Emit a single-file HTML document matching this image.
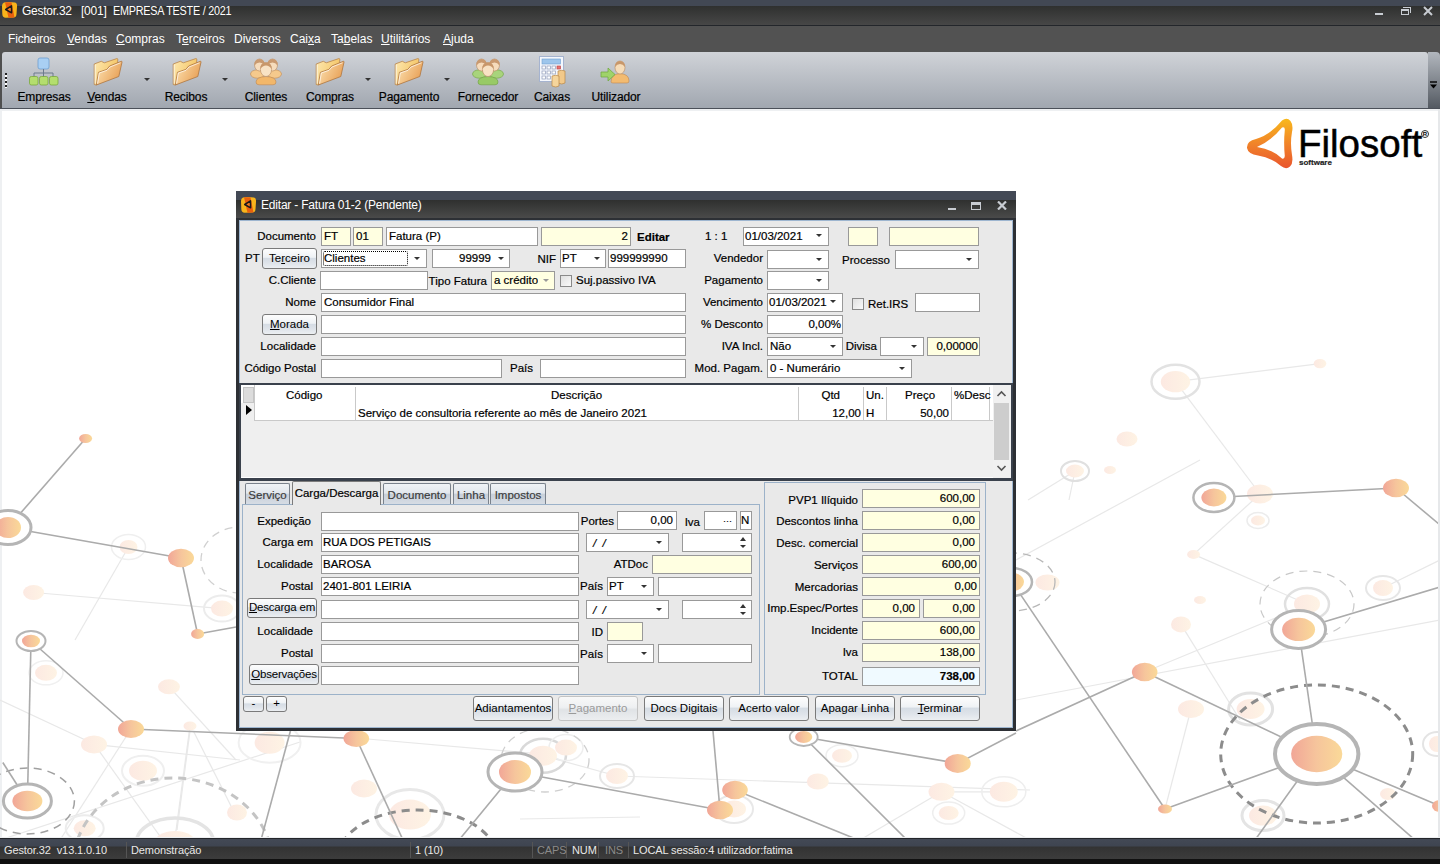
<!DOCTYPE html>
<html><head><meta charset="utf-8">
<style>
*{margin:0;padding:0;box-sizing:border-box}
html,body{width:1440px;height:864px;overflow:hidden}
body{position:relative;background:#fff;font-family:"Liberation Sans",sans-serif;font-size:11.5px;color:#000}
.a{position:absolute}
.t{position:absolute;white-space:nowrap;line-height:13px;-webkit-text-stroke:0.2px currentColor}
.r{transform:translateX(-100%)}
.f{position:absolute;background:#fff;border:1px solid #999;height:19px;overflow:hidden}
.y{background:#ffffe1}
.b{position:absolute;border:1px solid #7a7a7a;border-radius:3px;background:linear-gradient(#fdfdfd 0%,#eff2f5 44%,#d5dce4 48%,#dfe4ea 75%,#eceff2 100%);text-align:center;white-space:nowrap;line-height:18px}
.ar{position:absolute;width:0;height:0;border-left:3px solid transparent;border-right:3px solid transparent;border-top:3.5px solid #333}
.u{text-decoration:underline}
.tl{top:91px;font-size:12px;letter-spacing:-0.1px;transform:translateX(-50%)}
.tab{height:21px;border:1px solid #7a828c;border-bottom:none;background:linear-gradient(#f0f3f6 0%,#e2e7ed 45%,#c8d0da 52%,#d6dce4 100%);color:#3a3a3a;text-align:center;line-height:23px;white-space:nowrap;border-radius:2px 2px 0 0;-webkit-text-stroke:0.15px #3a3a3a}
.w{color:#fff;-webkit-text-stroke:0 !important}
#title{left:0;top:0;width:1440px;height:25px;background:linear-gradient(#424854 0,#424854 6px,#2f302f 6px,#474747 25px)}
#menu{left:0;top:25px;width:1440px;height:27px;background:#525252;border-top:1px solid #23262b}
#tb{left:2px;top:52px;width:1426px;height:56px;border-radius:3px 3px 0 0;background:linear-gradient(#d0d3d8,#a1a7b0)}
#tbo{left:1428px;top:52px;width:12px;height:56px;border-radius:0 4px 0 0;background:linear-gradient(#b2b7be,#545a62)}
#status{left:0;top:837px;width:1440px;height:27px;background:linear-gradient(#eef0f2 0,#eef0f2 1px,#23252a 1px,#23252a 2px,#434955 2px,#3f4551 9px,#333333 10px,#3c3c3c 22px,#101010 22px)}
.sep{position:absolute;top:842px;width:1px;height:16px;background:#1a1a1a;border-right:1px solid #555}
</style></head><body>
<!-- background network -->
<div class="a" style="left:0;top:108px;width:1440px;height:1px;background:#4b5059"></div>
<div class="a" style="left:0;top:109px;width:1440px;height:2px;background:#eef0f2"></div>
<div class="a" style="left:0;top:109px;width:2px;height:730px;background:#eef0f2"></div>
<div class="a" style="left:1438px;top:109px;width:2px;height:730px;background:#e6e8ea"></div>

<svg class="a" style="left:0;top:111px" width="1438" height="726" viewBox="0 111 1438 726">
<defs><linearGradient id="og"><stop offset="0" stop-color="#f1a697"/><stop offset="0.5" stop-color="#f6c59c"/><stop offset="1" stop-color="#fad998"/></linearGradient><linearGradient id="fg"><stop offset="0" stop-color="#fce9e2"/><stop offset="1" stop-color="#fef3e4"/></linearGradient></defs>
<line x1="1175.5" y1="381.7" x2="1320" y2="363.6" stroke="#e8e8e8" stroke-width="1.2"/>
<line x1="1175.5" y1="381.7" x2="1260" y2="494" stroke="#e8e8e8" stroke-width="1.2"/>
<line x1="1193.6" y1="554.4" x2="1260" y2="494" stroke="#e8e8e8" stroke-width="1.2"/>
<line x1="1193.6" y1="554.4" x2="1307" y2="604" stroke="#e8e8e8" stroke-width="1.2"/>
<line x1="1144.7" y1="672" x2="1290" y2="612" stroke="#e8e8e8" stroke-width="1.2"/>
<line x1="1075" y1="471" x2="1028" y2="500" stroke="#e8e8e8" stroke-width="1.2"/>
<line x1="1075" y1="471" x2="1069" y2="500" stroke="#e8e8e8" stroke-width="1.2"/>
<line x1="1181" y1="624.4" x2="1240" y2="720" stroke="#e8e8e8" stroke-width="1.2"/>
<line x1="1383" y1="588" x2="1440" y2="560" stroke="#e8e8e8" stroke-width="1.2"/>
<line x1="128.5" y1="547" x2="75" y2="640" stroke="#e8e8e8" stroke-width="1.2"/>
<line x1="33.6" y1="592.5" x2="222" y2="608.6" stroke="#e8e8e8" stroke-width="1.2"/>
<line x1="94" y1="744.4" x2="240" y2="760" stroke="#e8e8e8" stroke-width="1.2"/>
<line x1="169" y1="686.7" x2="236" y2="760" stroke="#e8e8e8" stroke-width="1.2"/>
<line x1="190" y1="726" x2="175" y2="838" stroke="#e8e8e8" stroke-width="1.2"/>
<line x1="0" y1="700" x2="94" y2="744" stroke="#e8e8e8" stroke-width="1.2"/>
<line x1="356" y1="738" x2="530" y2="753" stroke="#e8e8e8" stroke-width="1.2"/>
<line x1="543" y1="755.7" x2="617" y2="776" stroke="#e8e8e8" stroke-width="1.2"/>
<line x1="617" y1="776" x2="1030" y2="790" stroke="#e8e8e8" stroke-width="1.2"/>
<line x1="640" y1="817" x2="520" y2="819" stroke="#e8e8e8" stroke-width="1.2"/>
<line x1="941.5" y1="791.8" x2="1003.8" y2="791.8" stroke="#e8e8e8" stroke-width="1.2"/>
<line x1="941.5" y1="791.8" x2="860" y2="840" stroke="#e8e8e8" stroke-width="1.2"/>
<line x1="941.5" y1="791.8" x2="1030" y2="840" stroke="#e8e8e8" stroke-width="1.2"/>
<line x1="1191" y1="709" x2="1165" y2="809" stroke="#e8e8e8" stroke-width="1.2"/>
<line x1="1016" y1="700" x2="1440" y2="620" stroke="#e8e8e8" stroke-width="1.2"/>
<line x1="1016" y1="560" x2="1200" y2="460" stroke="#e8e8e8" stroke-width="1.2"/>
<line x1="60" y1="840" x2="131" y2="729" stroke="#e8e8e8" stroke-width="1.2"/>
<line x1="99.6" y1="751.7" x2="162.7" y2="840" stroke="#e8e8e8" stroke-width="1.2"/>
<line x1="190" y1="731" x2="177" y2="830" stroke="#e8e8e8" stroke-width="1.2"/>
<line x1="193.4" y1="731" x2="233" y2="810" stroke="#e8e8e8" stroke-width="1.2"/>
<line x1="0" y1="840" x2="300" y2="742" stroke="#e8e8e8" stroke-width="1.2"/>
<ellipse cx="1175.5" cy="381.7" rx="24" ry="17" fill="none" stroke="#e2e2e2" stroke-width="2.5"/>
<ellipse cx="1258" cy="520.5" rx="11" ry="8" fill="none" stroke="#ececec" stroke-width="1.5"/>
<ellipse cx="1383" cy="588" rx="17" ry="12" fill="none" stroke="#e6e6e6" stroke-width="2"/>
<ellipse cx="1307" cy="604" rx="22" ry="16" fill="none" stroke="#e0e0e0" stroke-width="2.5"/>
<ellipse cx="1075" cy="471" rx="14" ry="10" fill="none" stroke="#e0e0e0" stroke-width="2"/>
<ellipse cx="128.5" cy="547" rx="17" ry="12.5" fill="none" stroke="#efefef" stroke-width="1.5"/>
<ellipse cx="222" cy="608.6" rx="18" ry="13" fill="none" stroke="#ececec" stroke-width="2"/>
<ellipse cx="84.7" cy="828.3" rx="19" ry="13" fill="none" stroke="#ececec" stroke-width="2"/>
<ellipse cx="143" cy="770.8" rx="21" ry="15" fill="none" stroke="#efefef" stroke-width="2"/>
<ellipse cx="175" cy="843" rx="38.7" ry="25" fill="none" stroke="#e4e4e4" stroke-width="3.5"/>
<ellipse cx="46" cy="672.8" rx="17" ry="12" fill="none" stroke="#f0f0f0" stroke-width="1.5"/>
<ellipse cx="269.6" cy="742.7" rx="31" ry="20" fill="none" stroke="#f0f0f0" stroke-width="2"/>
<ellipse cx="410" cy="814.6" rx="34" ry="25" fill="none" stroke="#e8e8e8" stroke-width="3"/>
<ellipse cx="543" cy="755.7" rx="23" ry="17" fill="none" stroke="#d9d9d9" stroke-width="2.5"/>
<ellipse cx="566" cy="747.6" rx="17" ry="13" fill="none" stroke="#eeeeee" stroke-width="1.5"/>
<ellipse cx="617" cy="776" rx="17" ry="12" fill="none" stroke="#e6e6e6" stroke-width="2"/>
<ellipse cx="734" cy="809" rx="19" ry="14" fill="none" stroke="#e8e8e8" stroke-width="2"/>
<ellipse cx="842" cy="755.7" rx="16" ry="11" fill="none" stroke="#eeeeee" stroke-width="1.5"/>
<ellipse cx="948.7" cy="813" rx="16" ry="11" fill="none" stroke="#eeeeee" stroke-width="1.5"/>
<ellipse cx="1003.8" cy="791.8" rx="22" ry="15" fill="none" stroke="#eeeeee" stroke-width="1.5"/>
<ellipse cx="1250.6" cy="709" rx="22" ry="16" fill="none" stroke="#e2e2e2" stroke-width="3"/>
<ellipse cx="1263" cy="815.6" rx="21" ry="15" fill="none" stroke="#e4e4e4" stroke-width="3"/>
<ellipse cx="1437" cy="744" rx="14" ry="12" fill="none" stroke="#e4e4e4" stroke-width="2"/>
<ellipse cx="1175.5" cy="381.7" rx="14.7" ry="10.6" fill="url(#fg)"/>
<ellipse cx="1320" cy="363.6" rx="6.3" ry="4.7" fill="url(#fg)"/>
<ellipse cx="1260" cy="494" rx="13" ry="9.5" fill="url(#fg)"/>
<ellipse cx="1307" cy="604" rx="13" ry="9.5" fill="url(#fg)"/>
<ellipse cx="1193.6" cy="554.4" rx="6.5" ry="4.5" fill="url(#fg)"/>
<ellipse cx="1181" cy="624.4" rx="10" ry="8" fill="url(#fg)"/>
<ellipse cx="1258" cy="520.5" rx="7" ry="5" fill="url(#fg)"/>
<ellipse cx="1383" cy="588" rx="10" ry="8" fill="url(#fg)"/>
<ellipse cx="1075" cy="471" rx="9" ry="6.5" fill="url(#fg)"/>
<ellipse cx="1127" cy="439" rx="10.5" ry="7.5" fill="url(#fg)"/>
<ellipse cx="33.6" cy="592.5" rx="10.5" ry="7.5" fill="url(#fg)"/>
<ellipse cx="128.5" cy="547" rx="9" ry="7" fill="url(#fg)"/>
<ellipse cx="222" cy="608.6" rx="11" ry="8" fill="url(#fg)"/>
<ellipse cx="94" cy="744.4" rx="13" ry="9" fill="url(#fg)"/>
<ellipse cx="169" cy="686.7" rx="11" ry="7.5" fill="url(#fg)"/>
<ellipse cx="190" cy="726" rx="6.5" ry="4.5" fill="url(#fg)"/>
<ellipse cx="84.7" cy="828.3" rx="11" ry="8" fill="url(#fg)"/>
<ellipse cx="143" cy="770.8" rx="14" ry="10" fill="url(#fg)"/>
<ellipse cx="175" cy="845" rx="22" ry="14" fill="url(#fg)"/>
<ellipse cx="46" cy="672.8" rx="11" ry="8" fill="url(#fg)"/>
<ellipse cx="269.6" cy="742.7" rx="15" ry="11" fill="url(#fg)"/>
<ellipse cx="364" cy="788.5" rx="13" ry="9" fill="url(#fg)"/>
<ellipse cx="410" cy="814.6" rx="21" ry="15" fill="url(#fg)"/>
<ellipse cx="237" cy="812.5" rx="10" ry="8" fill="url(#fg)"/>
<ellipse cx="543" cy="755.7" rx="14" ry="10" fill="url(#fg)"/>
<ellipse cx="566" cy="747.6" rx="11" ry="8" fill="url(#fg)"/>
<ellipse cx="617" cy="776" rx="11" ry="8" fill="url(#fg)"/>
<ellipse cx="734" cy="809" rx="12" ry="8.5" fill="url(#fg)"/>
<ellipse cx="941.5" cy="791.8" rx="13" ry="9" fill="url(#fg)"/>
<ellipse cx="817.8" cy="781.5" rx="11" ry="8" fill="url(#fg)"/>
<ellipse cx="842" cy="755.7" rx="10" ry="7" fill="url(#fg)"/>
<ellipse cx="948.7" cy="813" rx="10" ry="7" fill="url(#fg)"/>
<ellipse cx="1003.8" cy="791.8" rx="14" ry="10" fill="url(#fg)"/>
<ellipse cx="1047.5" cy="582.5" rx="12" ry="8" fill="url(#fg)"/>
<ellipse cx="1191" cy="709" rx="13" ry="9" fill="url(#fg)"/>
<ellipse cx="1250.6" cy="709" rx="14" ry="10" fill="url(#fg)"/>
<ellipse cx="1263" cy="815.6" rx="14" ry="10" fill="url(#fg)"/>
<ellipse cx="1437" cy="744" rx="8" ry="8" fill="url(#fg)"/>
<ellipse cx="1388" cy="794" rx="8" ry="6" fill="url(#fg)"/>
<ellipse cx="1110" cy="470" rx="6" ry="4" fill="url(#fg)"/>
<ellipse cx="1200" cy="600" rx="6" ry="4" fill="url(#fg)"/>
<ellipse cx="27.4" cy="801" rx="47" ry="33" fill="none" stroke="#a0a0a0" stroke-width="1.5" stroke-dasharray="8 6"/>
<ellipse cx="417.5" cy="860" rx="80" ry="50" fill="none" stroke="#8c8c8c" stroke-width="3" stroke-dasharray="8 6"/>
<ellipse cx="1316.7" cy="754" rx="96" ry="69" fill="none" stroke="#8c8c8c" stroke-width="3" stroke-dasharray="8 6"/>
<ellipse cx="1307" cy="604" rx="47" ry="33" fill="none" stroke="#c8c8c8" stroke-width="1.2" stroke-dasharray="8 6"/>
<ellipse cx="1012" cy="582" rx="43" ry="29" fill="none" stroke="#b8b8b8" stroke-width="1.3" stroke-dasharray="8 6"/>
<ellipse cx="545" cy="760" rx="44" ry="32" fill="none" stroke="#cfcfcf" stroke-width="1.3" stroke-dasharray="8 6"/>
<ellipse cx="240" cy="560" rx="39" ry="33" fill="none" stroke="#d0d0d0" stroke-width="1.3" stroke-dasharray="8 6"/>
<ellipse cx="940" cy="870" rx="35" ry="30" fill="none" stroke="#999999" stroke-width="2.5" stroke-dasharray="8 6"/>
<ellipse cx="173" cy="866" rx="100" ry="88" fill="none" stroke="#c4c4c4" stroke-width="3" stroke-dasharray="8 6"/>
<line x1="85.6" y1="438.5" x2="8" y2="527.5" stroke="#ababab" stroke-width="1.6"/>
<line x1="8" y1="527.5" x2="181" y2="558" stroke="#ababab" stroke-width="1.6"/>
<line x1="181" y1="558" x2="197.6" y2="634" stroke="#ababab" stroke-width="1.6"/>
<line x1="197.6" y1="634" x2="236" y2="627" stroke="#ababab" stroke-width="1.6"/>
<line x1="31" y1="641" x2="131" y2="729" stroke="#ababab" stroke-width="1.6"/>
<line x1="31" y1="641" x2="27.4" y2="801" stroke="#ababab" stroke-width="1.6"/>
<line x1="2.8" y1="762.5" x2="27.4" y2="801" stroke="#ababab" stroke-width="1.6"/>
<line x1="131" y1="729" x2="356.3" y2="738.5" stroke="#ababab" stroke-width="1.6"/>
<line x1="356.3" y1="738.5" x2="403" y2="840" stroke="#ababab" stroke-width="1.6"/>
<line x1="290.4" y1="731" x2="261" y2="840" stroke="#ababab" stroke-width="1.6"/>
<line x1="515" y1="772" x2="720" y2="810" stroke="#ababab" stroke-width="1.6"/>
<line x1="515" y1="772" x2="459" y2="840" stroke="#ababab" stroke-width="1.6"/>
<line x1="713" y1="731" x2="720" y2="810" stroke="#ababab" stroke-width="1.6"/>
<line x1="735" y1="790" x2="858.4" y2="840" stroke="#ababab" stroke-width="1.6"/>
<line x1="803.7" y1="737" x2="957.7" y2="763.4" stroke="#ababab" stroke-width="1.6"/>
<line x1="803.7" y1="737" x2="907" y2="840" stroke="#ababab" stroke-width="1.6"/>
<line x1="957.7" y1="763.4" x2="1016" y2="733" stroke="#ababab" stroke-width="1.6"/>
<line x1="1012" y1="582" x2="1165" y2="809" stroke="#ababab" stroke-width="1.6"/>
<line x1="1144.7" y1="672" x2="1016" y2="731" stroke="#ababab" stroke-width="1.6"/>
<line x1="1144.7" y1="672" x2="1316.7" y2="754" stroke="#ababab" stroke-width="1.6"/>
<line x1="1213.9" y1="497.5" x2="1396" y2="488" stroke="#ababab" stroke-width="1.6"/>
<line x1="1396" y1="488" x2="1440" y2="525" stroke="#ababab" stroke-width="1.6"/>
<line x1="1298.6" y1="629.4" x2="1440" y2="587" stroke="#ababab" stroke-width="1.6"/>
<line x1="1298.6" y1="629.4" x2="1316.7" y2="754" stroke="#ababab" stroke-width="1.6"/>
<line x1="1165" y1="809" x2="1316.7" y2="754" stroke="#ababab" stroke-width="1.6"/>
<line x1="1316.7" y1="754" x2="1440" y2="806" stroke="#ababab" stroke-width="1.6"/>
<line x1="1316.7" y1="754" x2="1415" y2="840" stroke="#ababab" stroke-width="1.6"/>
<line x1="1316.7" y1="754" x2="1255" y2="840" stroke="#ababab" stroke-width="1.6"/>
<ellipse cx="8" cy="527.5" rx="23" ry="17" fill="#fff" stroke="#b5b5b5" stroke-width="3"/>
<ellipse cx="31" cy="641" rx="14.5" ry="10" fill="#fff" stroke="#b5b5b5" stroke-width="2"/>
<ellipse cx="27.4" cy="801" rx="24" ry="17" fill="#fff" stroke="#b5b5b5" stroke-width="3"/>
<ellipse cx="515" cy="772" rx="27" ry="19" fill="#fff" stroke="#b5b5b5" stroke-width="3"/>
<ellipse cx="803.7" cy="737" rx="14" ry="9" fill="#fff" stroke="#b5b5b5" stroke-width="1.8"/>
<ellipse cx="1012" cy="582" rx="20" ry="14" fill="#fff" stroke="#b5b5b5" stroke-width="2.5"/>
<ellipse cx="1213.9" cy="497.5" rx="20.5" ry="14.5" fill="#fff" stroke="#b5b5b5" stroke-width="2.5"/>
<ellipse cx="1298.6" cy="629.4" rx="27" ry="19" fill="#fff" stroke="#b5b5b5" stroke-width="3"/>
<ellipse cx="1316.7" cy="754" rx="41.7" ry="30" fill="#fff" stroke="#b5b5b5" stroke-width="4"/>
<ellipse cx="85.6" cy="438.5" rx="6.5" ry="4.6" fill="url(#og)"/>
<ellipse cx="8" cy="527.5" rx="13" ry="10.5" fill="url(#og)"/>
<ellipse cx="181" cy="558" rx="13" ry="9.3" fill="url(#og)"/>
<ellipse cx="31" cy="641" rx="9" ry="6.3" fill="url(#og)"/>
<ellipse cx="197.6" cy="634" rx="6.5" ry="5" fill="url(#og)"/>
<ellipse cx="131" cy="729" rx="13" ry="9" fill="url(#og)"/>
<ellipse cx="27.4" cy="801" rx="15" ry="10.3" fill="url(#og)"/>
<ellipse cx="356.3" cy="738.5" rx="12.8" ry="8.5" fill="url(#og)"/>
<ellipse cx="515" cy="772" rx="16" ry="11.9" fill="url(#og)"/>
<ellipse cx="720" cy="810" rx="13" ry="9.2" fill="url(#og)"/>
<ellipse cx="735" cy="790" rx="12.8" ry="9.2" fill="url(#og)"/>
<ellipse cx="803.7" cy="737" rx="8.6" ry="6" fill="url(#og)"/>
<ellipse cx="957.7" cy="763.4" rx="13" ry="9.5" fill="url(#og)"/>
<ellipse cx="1013" cy="582" rx="11" ry="9" fill="url(#og)"/>
<ellipse cx="1144.7" cy="672" rx="12.8" ry="9.3" fill="url(#og)"/>
<ellipse cx="1213.9" cy="497.5" rx="12.5" ry="9" fill="url(#og)"/>
<ellipse cx="1396" cy="488" rx="13" ry="9.3" fill="url(#og)"/>
<ellipse cx="1298.6" cy="629.4" rx="16.5" ry="11.7" fill="url(#og)"/>
<ellipse cx="1316.7" cy="754" rx="25.6" ry="18.2" fill="url(#og)"/>
<ellipse cx="1165" cy="809" rx="7" ry="4.5" fill="url(#og)"/>
<ellipse cx="1440" cy="806" rx="8" ry="6" fill="url(#og)"/>
</svg>
<svg class="a" style="left:1246px;top:118px" width="48" height="52" viewBox="0 0 48 52"><defs><linearGradient id="lg" x1="0" y1="0" x2="0" y2="1"><stop offset="0" stop-color="#f8b81c"/><stop offset="0.55" stop-color="#f07f2a"/><stop offset="1" stop-color="#e9562e"/></linearGradient></defs><path fill="url(#lg)" fill-rule="evenodd" d="M36 2.5 Q41 -1 44.5 3 Q47.5 7 46 14 Q44 25 46 37 Q47.5 45 44 48.5 Q40 52 35 48 Q26 40 12 37.5 Q2 36 1 30 Q0.5 23 10 21 Q24 17 36 2.5 Z M36 9.5 Q26 22 11 29 Q26 31 36 40.5 Q38.5 41.5 38.8 38 Q37.5 25 38.8 12 Q39 8.5 36 9.5 Z"/></svg>
<div class="t" style="left:1298px;top:124px;font-size:38.5px;line-height:40px;-webkit-text-stroke:0.5px #000;letter-spacing:0px">Filosoft</div>
<div class="a" style="left:1421px;top:130px;width:8px;height:8px;border:1px solid #333;border-radius:50%;font-size:6px;line-height:6px;text-align:center;font-weight:bold">R</div>
<div class="t" style="left:1299px;top:158px;font-size:8px;line-height:10px;font-weight:bold;color:#222">software</div>
<!-- title bar -->
<div id="title" class="a"></div>
<div class="t w" style="left:22px;top:5px;font-size:12px;letter-spacing:-0.25px">Gestor.32&nbsp;&nbsp; [001]&nbsp; <span style="display:inline-block;transform:scaleX(0.9);transform-origin:0 0">EMPRESA TESTE / 2021</span></div>
<div id="menu" class="a"></div>
<div class="a" style="left:0;top:52px;width:1440px;height:8px;background:#505050"></div>
<div class="a" style="left:0;top:52px;width:2px;height:56px;background:#4f4f4f"></div>
<div id="tb" class="a"></div>
<div id="tbo" class="a"></div>


<!-- toolbar -->
<div class="a" style="left:5px;top:73px;width:2px;height:15px;background:repeating-linear-gradient(#222 0,#222 2px,#fff 2px,#fff 4px)"></div>
<svg class="a" style="left:28px;top:57px" width="32" height="29" viewBox="0 0 32 29"><rect x="10" y="1" width="11" height="11" rx="2" fill="#a9cff3" stroke="#6f9fd0" stroke-width="0.8"/><path d="M15.5 12 V16 M6 20 V16 H25 V20 M15.5 16 V20" stroke="#6c7a8c" stroke-width="1" fill="none"/><rect x="1.5" y="19.5" width="8.5" height="8.5" rx="1.8" fill="#b4de6e" stroke="#7aa83e" stroke-width="0.8"/><rect x="11.5" y="19.5" width="8.5" height="8.5" rx="1.8" fill="#b4de6e" stroke="#7aa83e" stroke-width="0.8"/><rect x="21.5" y="19.5" width="8.5" height="8.5" rx="1.8" fill="#b4de6e" stroke="#7aa83e" stroke-width="0.8"/></svg>
<svg class="a" style="left:88px;top:54px" width="40" height="36" viewBox="0 0 40 36"><defs><linearGradient id="fb88" x1="0" y1="0" x2="1" y2="0.4"><stop offset="0" stop-color="#fde9b2"/><stop offset="1" stop-color="#f4c463"/></linearGradient><linearGradient id="ff88" x1="0" y1="0" x2="1" y2="0.5"><stop offset="0" stop-color="#fde6b8"/><stop offset="1" stop-color="#e9a258"/></linearGradient></defs><path d="M6.2 30.5 L6.2 10 L13.3 7.3 L16.3 8.8 L28.8 4.6 Q29.8 4.4 29.8 5.6 L29 20 L8 31 Z" fill="url(#fb88)" stroke="#b7844c" stroke-width="0.8" stroke-linejoin="round"/><path d="M7.2 29.5 L7.2 10.7" stroke="#fff" stroke-width="0.8" opacity="0.8"/><path d="M8.3 31 L10.4 18.3 L18.8 15.4 L21.7 12 L33.3 7.3 Q34.2 7.1 34 8.2 L30.8 22.5 Z" fill="url(#ff88)" stroke="#ae7640" stroke-width="0.8" stroke-linejoin="round"/><path d="M9.6 29.5 L11.3 19 L19 16.3 L22 13 L32.5 8.8" stroke="#fff" stroke-width="0.8" fill="none" opacity="0.85"/></svg><svg class="a" style="left:167px;top:54px" width="40" height="36" viewBox="0 0 40 36"><defs><linearGradient id="fb167" x1="0" y1="0" x2="1" y2="0.4"><stop offset="0" stop-color="#fde9b2"/><stop offset="1" stop-color="#f4c463"/></linearGradient><linearGradient id="ff167" x1="0" y1="0" x2="1" y2="0.5"><stop offset="0" stop-color="#fde6b8"/><stop offset="1" stop-color="#e9a258"/></linearGradient></defs><path d="M6.2 30.5 L6.2 10 L13.3 7.3 L16.3 8.8 L28.8 4.6 Q29.8 4.4 29.8 5.6 L29 20 L8 31 Z" fill="url(#fb167)" stroke="#b7844c" stroke-width="0.8" stroke-linejoin="round"/><path d="M7.2 29.5 L7.2 10.7" stroke="#fff" stroke-width="0.8" opacity="0.8"/><path d="M8.3 31 L10.4 18.3 L18.8 15.4 L21.7 12 L33.3 7.3 Q34.2 7.1 34 8.2 L30.8 22.5 Z" fill="url(#ff167)" stroke="#ae7640" stroke-width="0.8" stroke-linejoin="round"/><path d="M9.6 29.5 L11.3 19 L19 16.3 L22 13 L32.5 8.8" stroke="#fff" stroke-width="0.8" fill="none" opacity="0.85"/></svg><svg class="a" style="left:310px;top:54px" width="40" height="36" viewBox="0 0 40 36"><defs><linearGradient id="fb310" x1="0" y1="0" x2="1" y2="0.4"><stop offset="0" stop-color="#fde9b2"/><stop offset="1" stop-color="#f4c463"/></linearGradient><linearGradient id="ff310" x1="0" y1="0" x2="1" y2="0.5"><stop offset="0" stop-color="#fde6b8"/><stop offset="1" stop-color="#e9a258"/></linearGradient></defs><path d="M6.2 30.5 L6.2 10 L13.3 7.3 L16.3 8.8 L28.8 4.6 Q29.8 4.4 29.8 5.6 L29 20 L8 31 Z" fill="url(#fb310)" stroke="#b7844c" stroke-width="0.8" stroke-linejoin="round"/><path d="M7.2 29.5 L7.2 10.7" stroke="#fff" stroke-width="0.8" opacity="0.8"/><path d="M8.3 31 L10.4 18.3 L18.8 15.4 L21.7 12 L33.3 7.3 Q34.2 7.1 34 8.2 L30.8 22.5 Z" fill="url(#ff310)" stroke="#ae7640" stroke-width="0.8" stroke-linejoin="round"/><path d="M9.6 29.5 L11.3 19 L19 16.3 L22 13 L32.5 8.8" stroke="#fff" stroke-width="0.8" fill="none" opacity="0.85"/></svg><svg class="a" style="left:389px;top:54px" width="40" height="36" viewBox="0 0 40 36"><defs><linearGradient id="fb389" x1="0" y1="0" x2="1" y2="0.4"><stop offset="0" stop-color="#fde9b2"/><stop offset="1" stop-color="#f4c463"/></linearGradient><linearGradient id="ff389" x1="0" y1="0" x2="1" y2="0.5"><stop offset="0" stop-color="#fde6b8"/><stop offset="1" stop-color="#e9a258"/></linearGradient></defs><path d="M6.2 30.5 L6.2 10 L13.3 7.3 L16.3 8.8 L28.8 4.6 Q29.8 4.4 29.8 5.6 L29 20 L8 31 Z" fill="url(#fb389)" stroke="#b7844c" stroke-width="0.8" stroke-linejoin="round"/><path d="M7.2 29.5 L7.2 10.7" stroke="#fff" stroke-width="0.8" opacity="0.8"/><path d="M8.3 31 L10.4 18.3 L18.8 15.4 L21.7 12 L33.3 7.3 Q34.2 7.1 34 8.2 L30.8 22.5 Z" fill="url(#ff389)" stroke="#ae7640" stroke-width="0.8" stroke-linejoin="round"/><path d="M9.6 29.5 L11.3 19 L19 16.3 L22 13 L32.5 8.8" stroke="#fff" stroke-width="0.8" fill="none" opacity="0.85"/></svg><svg class="a" style="left:250px;top:58px" width="32" height="28" viewBox="0 0 32 28"><ellipse cx="7.5" cy="16" rx="7" ry="4.2" fill="#f5c98c" stroke="#c08850" stroke-width="0.6"/><ellipse cx="24.5" cy="16" rx="7" ry="4.2" fill="#f5c98c" stroke="#c08850" stroke-width="0.6"/><ellipse cx="9.5" cy="7" rx="5" ry="6" fill="#f6dcbc" stroke="#b98a60" stroke-width="0.6"/><path d="M4.5 7.5 Q4 1 9.5 1 Q15 1 14.5 7.5 Q12.5 4.5 9.5 4.5 Q6.5 4.5 4.5 7.5Z" fill="#c99a70"/><ellipse cx="22.5" cy="7" rx="5" ry="6" fill="#f6dcbc" stroke="#b98a60" stroke-width="0.6"/><path d="M17.5 7.5 Q17 1 22.5 1 Q28 1 27.5 7.5 Q25.5 4.5 22.5 4.5 Q19.5 4.5 17.5 7.5Z" fill="#c99a70"/><path d="M6 24 Q6 19 16 18.5 Q26 19 26 24 Q26 26.8 23 26.8 L9 26.8 Q6 26.8 6 24Z" fill="#f2b76a" stroke="#c08850" stroke-width="0.6"/><ellipse cx="16" cy="11.5" rx="5.6" ry="7" fill="#f8e2c4" stroke="#b98a60" stroke-width="0.6"/><path d="M10.4 11 Q10 4.5 16 4.5 Q22 4.5 21.6 11 Q19.5 7.5 16 7.5 Q12.5 7.5 10.4 11Z" fill="#c8976a"/></svg><svg class="a" style="left:472px;top:58px" width="32" height="28" viewBox="0 0 32 28"><ellipse cx="7.5" cy="16" rx="7" ry="4.2" fill="#a8d47c" stroke="#6ea040" stroke-width="0.6"/><ellipse cx="24.5" cy="16" rx="7" ry="4.2" fill="#a8d47c" stroke="#6ea040" stroke-width="0.6"/><ellipse cx="9.5" cy="7" rx="5" ry="6" fill="#f6dcbc" stroke="#b98a60" stroke-width="0.6"/><path d="M4.5 7.5 Q4 1 9.5 1 Q15 1 14.5 7.5 Q12.5 4.5 9.5 4.5 Q6.5 4.5 4.5 7.5Z" fill="#c99a70"/><ellipse cx="22.5" cy="7" rx="5" ry="6" fill="#f6dcbc" stroke="#b98a60" stroke-width="0.6"/><path d="M17.5 7.5 Q17 1 22.5 1 Q28 1 27.5 7.5 Q25.5 4.5 22.5 4.5 Q19.5 4.5 17.5 7.5Z" fill="#c99a70"/><path d="M6 24 Q6 19 16 18.5 Q26 19 26 24 Q26 26.8 23 26.8 L9 26.8 Q6 26.8 6 24Z" fill="#98ca66" stroke="#6ea040" stroke-width="0.6"/><ellipse cx="16" cy="11.5" rx="5.6" ry="7" fill="#f8e2c4" stroke="#b98a60" stroke-width="0.6"/><path d="M10.4 11 Q10 4.5 16 4.5 Q22 4.5 21.6 11 Q19.5 7.5 16 7.5 Q12.5 7.5 10.4 11Z" fill="#c8976a"/></svg>
<svg class="a" style="left:539px;top:56px" width="28" height="32" viewBox="0 0 28 32"><rect x="0.5" y="0.5" width="24" height="25" fill="#f5f8fd" stroke="#a5b3cf"/><rect x="3" y="3" width="18.5" height="5" fill="#9ec6ec" stroke="#6f9fd0" stroke-width="0.6"/><g fill="#fff" stroke="#8e9ab8" stroke-width="0.7"><rect x="3" y="10" width="3.5" height="3"/><rect x="8" y="10" width="3.5" height="3"/><rect x="13" y="10" width="3.5" height="3"/><rect x="3" y="15" width="3.5" height="3"/><rect x="8" y="15" width="3.5" height="3"/><rect x="13" y="15" width="3.5" height="3"/><rect x="3" y="20" width="3.5" height="3"/><rect x="8" y="20" width="3.5" height="3"/></g><rect x="18" y="10" width="3.5" height="3" fill="#e87474" stroke="#c04848" stroke-width="0.7"/><path d="M19 15 Q23 13.5 26 15 V27 Q23 29 19 27Z" fill="#f2c98a" stroke="#b88648" stroke-width="0.7"/><path d="M13 20 Q17 18.5 20 20 V30 Q17 32 13 30Z" fill="#f5d59c" stroke="#b88648" stroke-width="0.7"/></svg>
<svg class="a" style="left:600px;top:60px" width="30" height="24" viewBox="0 0 30 24"><path d="M11 22 Q11 14 20 13.5 Q29 14 29 21 Q29 23 27 23 L13 23 Q11 23 11 22Z" fill="#f3bb70" stroke="#c08850" stroke-width="0.6"/><ellipse cx="20" cy="7.5" rx="5" ry="6.5" fill="#f6dcb8" stroke="#b98a60" stroke-width="0.6"/><path d="M15 7 Q15 1 20 1 Q25 1 25 7 Q23 4 20 4 Q17 4 15 7Z" fill="#c8976a"/><path d="M1 12 H8 V8 L15 14.5 L8 21 V17 H1Z" fill="#9fd36a" stroke="#6ea83a" stroke-width="0.7"/></svg>
<div class="ar" style="left:144px;top:78px;border-left-width:3px;border-right-width:3px"></div>
<div class="ar" style="left:222px;top:78px;border-left-width:3px;border-right-width:3px"></div>
<div class="ar" style="left:365px;top:78px;border-left-width:3px;border-right-width:3px"></div>
<div class="ar" style="left:444px;top:78px;border-left-width:3px;border-right-width:3px"></div>
<div class="t tl" style="left:44px">Empresas</div>
<div class="t tl" style="left:107px"><span class="u">V</span>endas</div>
<div class="t tl" style="left:186px">Recibos</div>
<div class="t tl" style="left:266px">Clientes</div>
<div class="t tl" style="left:330px">Compras</div>
<div class="t tl" style="left:409px">Pagamento</div>
<div class="t tl" style="left:488px">Fornecedor</div>
<div class="t tl" style="left:552px">Caixas</div>
<div class="t tl" style="left:616px">Utilizador</div>
<svg class="a" style="left:1429px;top:81px" width="10" height="10"><path d="M1 1 H8" stroke="#000" stroke-width="1.4"/><path d="M1 3.5 H8 L4.5 7.5Z" fill="#000"/></svg>

<!-- status bar -->
<div id="status" class="a"></div>


<!-- app icon -->
<svg class="a" style="left:1px;top:1px" width="17" height="17" viewBox="0 0 17 17"><path d="M3 1.5 Q8 0.5 14 1.5 Q16.5 2 16 6 L15.5 13 Q15.5 16.5 12 16.5 L5 16.8 Q1.5 17 1.3 13 L1 5 Q1 2 3 1.5Z" fill="#f8b41b"/><path d="M4 1.2 L10.5 1.2 L13.5 16.6 L7.5 16.8Z" fill="#e8600f"/><path d="M4.7 8.5 L10.5 4.8 L10.6 11.8Z" fill="#f07a22" stroke="#1a1a1a" stroke-width="1.5" stroke-linejoin="round"/></svg>
<!-- main window buttons -->
<div class="a" style="left:1375px;top:13px;width:8px;height:2px;background:#c8ccd2"></div>
<div class="a" style="left:1401px;top:9px;width:8px;height:6px;border:1px solid #c8ccd2;border-top-width:2px"></div>
<div class="a" style="left:1403px;top:7px;width:8px;height:6px;border-top:1px solid #c8ccd2;border-right:1px solid #c8ccd2"></div>
<svg class="a" style="left:1423px;top:6px" width="10" height="10"><path d="M1 1 L9 9 M9 1 L1 9" stroke="#c8ccd2" stroke-width="2"/></svg>
<!-- menu -->
<div class="t w" style="left:8px;top:33px;font-size:12px;letter-spacing:-0.15px">Ficheiros</div>
<div class="t w" style="left:67px;top:33px;font-size:12px"><span class="u">V</span>endas</div>
<div class="t w" style="left:116px;top:33px;font-size:12px"><span class="u">C</span>ompras</div>
<div class="t w" style="left:176px;top:33px;font-size:12px">T<span class="u">e</span>rceiros</div>
<div class="t w" style="left:234px;top:33px;font-size:12px">Diversos</div>
<div class="t w" style="left:290px;top:33px;font-size:12px">Cai<span class="u">x</span>a</div>
<div class="t w" style="left:331px;top:33px;font-size:12px">Ta<span class="u">b</span>elas</div>
<div class="t w" style="left:381px;top:33px;font-size:12px"><span class="u">U</span>tilitários</div>
<div class="t w" style="left:443px;top:33px;font-size:12px"><span class="u">A</span>juda</div>

<!-- status bar -->
<div class="sep" style="left:126px"></div>
<div class="sep" style="left:410px"></div>
<div class="sep" style="left:532px"></div>
<div class="sep" style="left:566px"></div>
<div class="sep" style="left:598px"></div>
<div class="sep" style="left:628px"></div>
<div class="t" style="-webkit-text-stroke:0;font-size:11px;letter-spacing:-0.1px;left:4px;top:844px;color:#e8e8e8;">Gestor.32&nbsp; v13.1.0.10</div>
<div class="t" style="-webkit-text-stroke:0;font-size:11px;letter-spacing:-0.1px;left:131px;top:844px;color:#e8e8e8">Demonstração</div>
<div class="t" style="-webkit-text-stroke:0;font-size:11px;letter-spacing:-0.1px;left:415px;top:844px;color:#e8e8e8">1 (10)</div>
<div class="t" style="-webkit-text-stroke:0;font-size:11px;letter-spacing:-0.1px;left:537px;top:844px;color:#8a8a8a">CAPS</div>
<div class="t" style="-webkit-text-stroke:0;font-size:11px;letter-spacing:-0.1px;left:572px;top:844px;color:#e8e8e8">NUM</div>
<div class="t" style="-webkit-text-stroke:0;font-size:11px;letter-spacing:-0.1px;left:605px;top:844px;color:#8a8a8a">INS</div>
<div class="t" style="-webkit-text-stroke:0;font-size:11px;letter-spacing:-0.1px;left:633px;top:844px;color:#e8e8e8">LOCAL sessão:4 utilizador:fatima</div>

<!-- dialog -->
<div class="a" style="left:236px;top:191px;width:780px;height:540px;background:#2d3035"></div>
<div class="a" style="left:236px;top:191px;width:780px;height:9px;background:#434955"></div>
<div class="a" style="left:236px;top:200px;width:780px;height:18px;background:linear-gradient(#2f302f,#4a4a4a)"></div>
<div class="a" style="left:239px;top:220px;width:774px;height:508px;background:#e9e9e9;border:1px solid #9eb6d0"></div>


<!-- dialog title -->
<svg class="a" style="left:240px;top:196px" width="17" height="17" viewBox="0 0 17 17"><path d="M3 1.5 Q8 0.5 14 1.5 Q16.5 2 16 6 L15.5 13 Q15.5 16.5 12 16.5 L5 16.8 Q1.5 17 1.3 13 L1 5 Q1 2 3 1.5Z" fill="#f8b41b"/><path d="M4 1.2 L10.5 1.2 L13.5 16.6 L7.5 16.8Z" fill="#e8600f"/><path d="M4.7 8.5 L10.5 4.8 L10.6 11.8Z" fill="#f07a22" stroke="#1a1a1a" stroke-width="1.5" stroke-linejoin="round"/></svg>
<!-- dialog window buttons -->
<div class="a" style="left:948px;top:208px;width:8px;height:2px;background:#c8ccd2"></div>
<div class="a" style="left:971px;top:202px;width:10px;height:8px;border:1px solid #c8ccd2;border-top-width:3px"></div>
<svg class="a" style="left:997px;top:201px" width="10" height="9"><path d="M1 0.5 L9 8.5 M9 0.5 L1 8.5" stroke="#c8ccd2" stroke-width="2.2"/></svg>


<div class="t w" style="left:261px;top:199px;font-size:12px;letter-spacing:-0.2px;-webkit-text-stroke:0">Editar - Fatura 01-2 (Pendente)</div>

<!-- top form row1 -->
<div class="t r" style="left:316px;top:230px">Documento</div>
<div class="f y" style="left:321px;top:227px;width:30px"></div><div class="t" style="left:324px;top:230px">FT</div>
<div class="f y" style="left:353px;top:227px;width:30px"></div><div class="t" style="left:356px;top:230px">01</div>
<div class="f" style="left:386px;top:227px;width:152px"></div><div class="t" style="left:389px;top:230px">Fatura (P)</div>
<div class="f y" style="left:541px;top:227px;width:90px"></div><div class="t r" style="left:628px;top:230px">2</div>
<div class="t" style="left:637px;top:231px;font-weight:bold">Editar</div>
<div class="t" style="left:705px;top:230px">1 : 1</div>
<div class="f" style="left:743px;top:227px;width:86px"></div><div class="t" style="left:745px;top:230px">01/03/2021</div><div class="ar" style="left:816px;top:234px"></div>
<div class="f y" style="left:848px;top:227px;width:30px"></div>
<div class="f y" style="left:889px;top:227px;width:90px"></div>

<!-- row2 -->
<div class="t" style="left:245px;top:252px">PT</div>
<div class="b" style="left:262px;top:248px;width:55px;height:21px">Te<span class="u">r</span>ceiro</div>
<div class="f" style="left:321px;top:249px;width:106px"></div>
<div class="a" style="left:323px;top:251px;width:85px;height:15px;border:1px dotted #000;border-radius:2px"></div>
<div class="t" style="left:324px;top:252px">Clientes</div><div class="ar" style="left:414px;top:257px"></div>
<div class="f" style="left:432px;top:249px;width:78px"></div><div class="t r" style="left:491px;top:252px">99999</div><div class="ar" style="left:498px;top:257px"></div>
<div class="t r" style="left:556px;top:253px">NIF</div>
<div class="f" style="left:560px;top:249px;width:46px"></div><div class="t" style="left:562px;top:252px">PT</div><div class="ar" style="left:594px;top:257px"></div>
<div class="f" style="left:608px;top:249px;width:78px"></div><div class="t" style="left:610px;top:252px">999999990</div>
<div class="t r" style="left:763px;top:252px">Vendedor</div>
<div class="f" style="left:767px;top:250px;width:62px"></div><div class="ar" style="left:816px;top:258px"></div>
<div class="t r" style="left:890px;top:254px">Processo</div>
<div class="f" style="left:895px;top:250px;width:84px"></div><div class="ar" style="left:966px;top:258px"></div>

<!-- row3 -->
<div class="t r" style="left:316px;top:274px">C.Cliente</div>
<div class="f" style="left:320px;top:271px;width:108px"></div>
<div class="t r" style="left:487px;top:275px">Tipo Fatura</div>
<div class="f y" style="left:491px;top:271px;width:64px"></div><div class="t" style="left:494px;top:274px;width:44px;overflow:hidden">a crédito</div><div class="ar" style="left:543px;top:279px;border-top-color:#999"></div>
<div class="a" style="left:560px;top:275px;width:12px;height:12px;border:1px solid #8a8a8a;background:linear-gradient(135deg,#e0e0e0,#fafafa)"></div>
<div class="t" style="left:576px;top:274px">Suj.passivo IVA</div>
<div class="t r" style="left:763px;top:274px">Pagamento</div>
<div class="f" style="left:767px;top:271px;width:62px"></div><div class="ar" style="left:816px;top:279px"></div>

<!-- row4 -->
<div class="t r" style="left:316px;top:296px">Nome</div>
<div class="f" style="left:321px;top:293px;width:365px"></div><div class="t" style="left:324px;top:296px">Consumidor Final</div>
<div class="t r" style="left:763px;top:296px">Vencimento</div>
<div class="f" style="left:767px;top:293px;width:76px"></div><div class="t" style="left:769px;top:296px">01/03/2021</div><div class="ar" style="left:830px;top:300px"></div>
<div class="a" style="left:852px;top:298px;width:12px;height:12px;border:1px solid #8a8a8a;background:linear-gradient(135deg,#e0e0e0,#fafafa)"></div>
<div class="t" style="left:868px;top:298px">Ret.IRS</div>
<div class="f" style="left:915px;top:293px;width:65px"></div>

<!-- row5 -->
<div class="b" style="left:262px;top:314px;width:55px;height:21px"><span class="u">M</span>orada</div>
<div class="f" style="left:321px;top:315px;width:365px"></div>
<div class="t r" style="left:763px;top:318px">% Desconto</div>
<div class="f" style="left:767px;top:315px;width:76px"></div><div class="t r" style="left:841px;top:318px">0,00%</div>

<!-- row6 -->
<div class="t r" style="left:316px;top:340px">Localidade</div>
<div class="f" style="left:321px;top:337px;width:365px"></div>
<div class="t r" style="left:763px;top:340px">IVA Incl.</div>
<div class="f" style="left:767px;top:337px;width:76px"></div><div class="t" style="left:770px;top:340px">Não</div><div class="ar" style="left:830px;top:345px"></div>
<div class="t r" style="left:877px;top:340px">Divisa</div>
<div class="f" style="left:880px;top:337px;width:44px"></div><div class="ar" style="left:911px;top:345px"></div>
<div class="f y" style="left:927px;top:337px;width:53px"></div><div class="t r" style="left:978px;top:340px">0,00000</div>

<!-- row7 -->
<div class="t r" style="left:316px;top:362px">Código Postal</div>
<div class="f" style="left:321px;top:359px;width:181px"></div>
<div class="t r" style="left:533px;top:362px">País</div>
<div class="f" style="left:540px;top:359px;width:146px"></div>
<div class="t r" style="left:763px;top:362px">Mod. Pagam.</div>
<div class="f" style="left:767px;top:359px;width:145px"></div><div class="t" style="left:770px;top:362px">0 - Numerário</div><div class="ar" style="left:899px;top:367px"></div>


<!-- grid -->
<div class="a" style="left:239px;top:383px;width:774px;height:98px;background:#efefef;border:2px solid #3a414c;border-bottom-width:3px"></div>
<div class="a" style="left:241px;top:385px;width:752px;height:36px;background:#fff;border-bottom:1px solid #c9c9c9"></div>
<div class="a" style="left:241px;top:403px;width:13px;height:18px;background:#efefef"></div>
<div class="a" style="left:243px;top:387px;width:11px;height:16px;background:#dcdcdc;border:1px solid #c4c4c4"></div>
<div class="a" style="left:246px;top:405px;width:0;height:0;border-top:5.5px solid transparent;border-bottom:5.5px solid transparent;border-left:6.5px solid #000"></div>
<div class="a" style="left:254px;top:385px;width:1px;height:36px;background:#c9c9c9"></div>
<div class="a" style="left:355px;top:387px;width:1px;height:34px;background:#c9c9c9"></div>
<div class="a" style="left:798px;top:387px;width:1px;height:34px;background:#c9c9c9"></div>
<div class="a" style="left:863px;top:387px;width:1px;height:34px;background:#c9c9c9"></div>
<div class="a" style="left:886px;top:387px;width:1px;height:34px;background:#c9c9c9"></div>
<div class="a" style="left:951px;top:387px;width:1px;height:34px;background:#c9c9c9"></div>
<div class="a" style="left:989px;top:387px;width:1px;height:34px;background:#c9c9c9"></div>
<div class="t" style="left:286px;top:389px">Código</div>
<div class="t" style="left:551px;top:389px">Descrição</div>
<div class="t r" style="left:840px;top:389px">Qtd</div>
<div class="t" style="left:866px;top:389px">Un.</div>
<div class="t" style="left:905px;top:389px">Preço</div>
<div class="t" style="left:954px;top:389px">%Desc</div>
<div class="t" style="left:358px;top:407px">Serviço de consultoria referente ao mês de Janeiro 2021</div>
<div class="t r" style="left:861px;top:407px">12,00</div>
<div class="t" style="left:866px;top:407px">H</div>
<div class="t r" style="left:949px;top:407px">50,00</div>
<div class="a" style="left:241px;top:477px;width:770px;height:1px;background:#fff"></div>
<!-- scrollbar -->
<div class="a" style="left:993px;top:385px;width:18px;height:93px;background:#f0f0f0"></div>
<div class="a" style="left:994px;top:403px;width:15px;height:57px;background:#cdcdcd"></div>
<svg class="a" style="left:996px;top:390px" width="11" height="8"><path d="M1.5 6 L5.5 2 L9.5 6" fill="none" stroke="#555" stroke-width="1.6"/></svg>
<svg class="a" style="left:996px;top:464px" width="11" height="8"><path d="M1.5 2 L5.5 6 L9.5 2" fill="none" stroke="#555" stroke-width="1.6"/></svg>

<!-- tabs -->
<div class="a" style="left:242px;top:504px;width:518px;height:191px;border:1px solid #9cb2c9"></div>
<div class="a tab" style="left:245px;top:483px;width:45px">Serviço</div>
<div class="a tab" style="left:383px;top:483px;width:68px">Documento</div>
<div class="a tab" style="left:453px;top:483px;width:36px">Linha</div>
<div class="a tab" style="left:490px;top:483px;width:56px">Impostos</div>
<div class="a" style="left:292px;top:481px;width:89px;height:24px;background:#e9e9e9;border:1px solid #7c7c7c;border-bottom:none;border-radius:2px 2px 0 0;text-align:center;line-height:22px;-webkit-text-stroke:0.2px #000">Carga/Descarga</div>

<!-- tab panel fields -->
<div class="t r" style="left:311px;top:515px">Expedição</div>
<div class="f" style="left:321px;top:512px;width:258px"></div>
<div class="t r" style="left:313px;top:536px">Carga em</div>
<div class="f" style="left:321px;top:533px;width:258px"></div><div class="t" style="left:323px;top:536px">RUA DOS PETIGAIS</div>
<div class="t r" style="left:313px;top:558px">Localidade</div>
<div class="f" style="left:321px;top:555px;width:258px"></div><div class="t" style="left:323px;top:558px">BAROSA</div>
<div class="t r" style="left:313px;top:580px">Postal</div>
<div class="f" style="left:321px;top:577px;width:258px"></div><div class="t" style="left:323px;top:580px">2401-801 LEIRIA</div>
<div class="b" style="left:247px;top:598px;width:70px;height:20px;line-height:17px;letter-spacing:-0.2px"><span class="u">D</span>escarga em</div>
<div class="f" style="left:321px;top:600px;width:258px"></div>
<div class="t r" style="left:313px;top:625px">Localidade</div>
<div class="f" style="left:321px;top:622px;width:258px"></div>
<div class="t r" style="left:313px;top:647px">Postal</div>
<div class="f" style="left:321px;top:644px;width:258px"></div>
<div class="b" style="left:249px;top:664px;width:70px;height:21px;letter-spacing:-0.2px"><span class="u">O</span>bservações</div>
<div class="f" style="left:321px;top:666px;width:258px"></div>

<div class="t r" style="left:614px;top:515px">Portes</div>
<div class="f" style="left:617px;top:511px;width:60px"></div><div class="t r" style="left:673px;top:514px">0,00</div>
<div class="t r" style="left:700px;top:516px">Iva</div>
<div class="f" style="left:704px;top:511px;width:33px"></div><div class="t r" style="left:732px;top:515px;font-size:9px">···</div>
<div class="f" style="left:740px;top:511px;width:12px"></div><div class="t" style="left:741px;top:514px">N</div>
<div class="f" style="left:586px;top:533px;width:83px"></div><div class="t" style="left:593px;top:537px;font-style:italic">/&nbsp; /</div><div class="ar" style="left:656px;top:541px"></div>
<div class="f" style="left:682px;top:533px;width:70px"></div>
<div class="ar" style="left:740px;top:545px"></div><div class="ar" style="left:740px;top:537px;border-top:none;border-bottom:4px solid #333"></div>
<div class="t r" style="left:648px;top:558px">ATDoc</div>
<div class="f y" style="left:652px;top:555px;width:100px"></div>
<div class="t r" style="left:603px;top:580px">País</div>
<div class="f" style="left:607px;top:577px;width:47px"></div><div class="t" style="left:609px;top:580px">PT</div><div class="ar" style="left:641px;top:585px"></div>
<div class="f" style="left:658px;top:577px;width:94px"></div>
<div class="f" style="left:586px;top:600px;width:83px"></div><div class="t" style="left:593px;top:604px;font-style:italic">/&nbsp; /</div><div class="ar" style="left:656px;top:608px"></div>
<div class="f" style="left:682px;top:600px;width:70px"></div>
<div class="ar" style="left:740px;top:612px"></div><div class="ar" style="left:740px;top:604px;border-top:none;border-bottom:4px solid #333"></div>
<div class="t r" style="left:603px;top:626px">ID</div>
<div class="f y" style="left:607px;top:622px;width:36px"></div>
<div class="t r" style="left:603px;top:648px">País</div>
<div class="f" style="left:607px;top:644px;width:47px"></div><div class="ar" style="left:641px;top:652px"></div>
<div class="f" style="left:658px;top:644px;width:94px"></div>

<!-- totals -->
<div class="a" style="left:764px;top:482px;width:222px;height:213px;border:1px solid #9cb2c9"></div>
<div class="t r" style="left:858px;top:494px">PVP1 Ilíquido</div><div class="f y" style="left:862px;top:489px;width:118px"></div><div class="t r" style="left:975px;top:492px">600,00</div>
<div class="t r" style="left:858px;top:515px">Descontos linha</div><div class="f y" style="left:862px;top:511px;width:118px"></div><div class="t r" style="left:975px;top:514px">0,00</div>
<div class="t r" style="left:858px;top:537px">Desc. comercial</div><div class="f y" style="left:862px;top:533px;width:118px"></div><div class="t r" style="left:975px;top:536px">0,00</div>
<div class="t r" style="left:858px;top:559px">Serviços</div><div class="f y" style="left:862px;top:555px;width:118px"></div><div class="t r" style="left:977px;top:558px">600,00</div>
<div class="t r" style="left:858px;top:581px">Mercadorias</div><div class="f y" style="left:862px;top:577px;width:118px"></div><div class="t r" style="left:977px;top:580px">0,00</div>
<div class="t r" style="left:858px;top:602px">Imp.Espec/Portes</div><div class="f y" style="left:862px;top:599px;width:58px"></div><div class="t r" style="left:915px;top:602px">0,00</div><div class="f y" style="left:923px;top:599px;width:57px"></div><div class="t r" style="left:975px;top:602px">0,00</div>
<div class="t r" style="left:858px;top:624px">Incidente</div><div class="f y" style="left:862px;top:621px;width:118px"></div><div class="t r" style="left:975px;top:624px">600,00</div>
<div class="t r" style="left:858px;top:646px">Iva</div><div class="f y" style="left:862px;top:643px;width:118px"></div><div class="t r" style="left:975px;top:646px">138,00</div>
<div class="t r" style="left:858px;top:670px">TOTAL</div><div class="f" style="left:862px;top:667px;width:118px;background:#f0faff"></div><div class="t r" style="left:975px;top:670px;font-weight:bold">738,00</div>

<!-- bottom buttons -->
<div class="b" style="left:243px;top:696px;width:21px;height:16px;line-height:13px">-</div>
<div class="b" style="left:266px;top:696px;width:21px;height:16px;line-height:13px">+</div>
<div class="b" style="left:473px;top:696px;width:80px;height:25px;line-height:22px">Adiantamentos</div>
<div class="b" style="left:558px;top:696px;width:80px;height:25px;line-height:22px;color:#9a9a9a;border-color:#c3c3c3;background:linear-gradient(#f8f8f8,#eef0f2 45%,#e0e3e6 55%,#eceef0)"><span class="u">P</span>agamento</div>
<div class="b" style="left:644px;top:696px;width:80px;height:25px;line-height:22px">Docs Digitais</div>
<div class="b" style="left:729px;top:696px;width:80px;height:25px;line-height:22px">Acerto valor</div>
<div class="b" style="left:815px;top:696px;width:80px;height:25px;line-height:22px">Apagar Linha</div>
<div class="b" style="left:900px;top:696px;width:80px;height:25px;line-height:22px"><span class="u">T</span>erminar</div>

</body></html>
